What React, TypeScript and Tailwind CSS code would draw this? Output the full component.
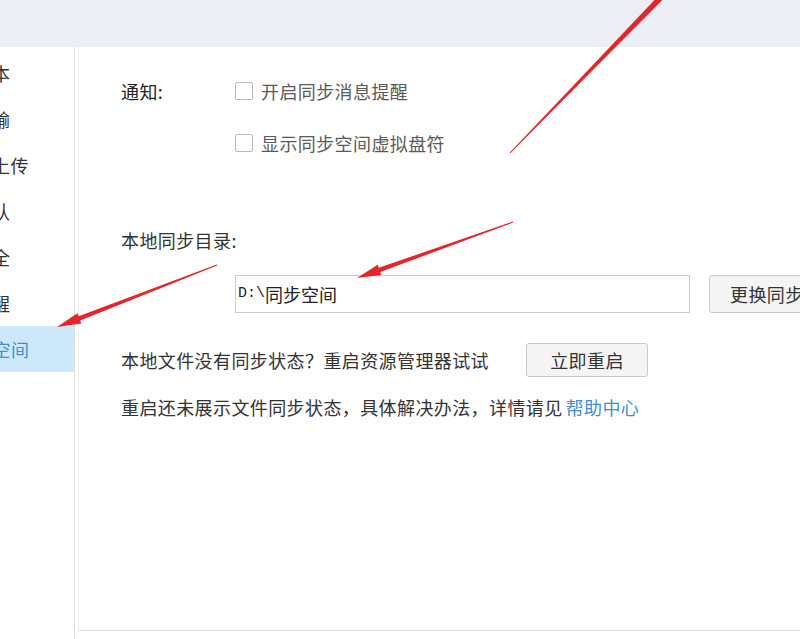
import React from "react";

type Pt = [number, number];

// tapered annotation arrow: thin at the tail, widening towards the head
function arrowPoints(tail: Pt, tip: Pt, tailW: number, shaftW: number, headLen: number, headW: number, head = true) {
  const dx = tip[0] - tail[0];
  const dy = tip[1] - tail[1];
  const len = Math.hypot(dx, dy);
  const ux = dx / len;
  const uy = dy / len;
  const nx = -uy;
  const ny = ux;
  const bx = tip[0] - ux * headLen;
  const by = tip[1] - uy * headLen;
  const p = (x: number, y: number) => `${x.toFixed(1)},${y.toFixed(1)}`;
  if (!head) {
    return [
      p(tail[0] + (nx * tailW) / 2, tail[1] + (ny * tailW) / 2),
      p(tip[0] + (nx * shaftW) / 2, tip[1] + (ny * shaftW) / 2),
      p(tip[0] - (nx * shaftW) / 2, tip[1] - (ny * shaftW) / 2),
      p(tail[0] - (nx * tailW) / 2, tail[1] - (ny * tailW) / 2),
    ].join(" ");
  }
  return [
    p(tail[0] + (nx * tailW) / 2, tail[1] + (ny * tailW) / 2),
    p(bx + (nx * shaftW) / 2, by + (ny * shaftW) / 2),
    p(bx + (nx * headW) / 2, by + (ny * headW) / 2),
    p(tip[0], tip[1]),
    p(bx - (nx * headW) / 2, by - (ny * headW) / 2),
    p(bx - (nx * shaftW) / 2, by - (ny * shaftW) / 2),
    p(tail[0] - (nx * tailW) / 2, tail[1] - (ny * tailW) / 2),
  ].join(" ");
}

const navItems = ["基本", "传输", "自动上传", "默认", "安全", "提醒", "同步空间"];

function Checkbox({ label }: { label: string }) {
  return (
    <label className="flex items-center h-[26px]">
      <span className="w-[18px] h-[18px] border border-[#b9b9b9] rounded-[2px] bg-white shrink-0" />
      <span className="ml-[8px] text-[#5a5a5a]">{label}</span>
    </label>
  );
}

export default function App() {
  return (
    <div
      className="relative w-[800px] h-[639px] overflow-hidden bg-white text-[18px] tracking-[0.4px] text-[#333]"
      style={{ fontFamily: '"Microsoft YaHei", "Noto Sans CJK SC", "Noto Sans", sans-serif' }}
    >
      <div className="h-[47px] bg-[#ebeef3]" />

      <div className="flex h-[592px]">
        {/* settings nav, cut off at the left edge */}
        <div className="w-[75px] shrink-0 border-r border-[#e0e0e0] overflow-hidden pt-[3px]">
          <div className="ml-[-90px] w-[164px]">
            {navItems.map((item) => (
              <div
                key={item}
                className={
                  item === "同步空间"
                    ? "h-[46px] flex items-center justify-center bg-[#cde8f9] text-[#3d8fd6] w-[165px]"
                    : "h-[46px] flex items-center justify-center text-[#333]"
                }
              >
                {item}
              </div>
            ))}
          </div>
        </div>

        <div className="flex-1 pl-[3px] flex flex-col">
          <div className="h-[584px] border-l border-b border-l-[#f0f0f0] border-b-[#dcdcdc] pl-[42px] pt-[31px]">
            <div className="flex">
              <div className="w-[114px] h-[26px] flex items-center text-[#222]">通知:</div>
              <div className="flex flex-col gap-[26px]">
                <Checkbox label="开启同步消息提醒" />
                <Checkbox label="显示同步空间虚拟盘符" />
              </div>
            </div>

            <div className="mt-[71px] h-[26px] flex items-center">本地同步目录:</div>

            <div className="mt-[22px] ml-[114px] flex items-center gap-[19px]">
              <div className="w-[455px] h-[38px] border border-[#c3cfd8] flex items-center pl-[2px] text-[#222] whitespace-nowrap">
                <span className="text-[15px] tracking-normal" style={{ fontFamily: '"Liberation Mono", monospace' }}>
                  D:\
                </span>
                <span className="tracking-normal">同步空间</span>
              </div>
              <button className="w-[120px] h-[38px] shrink-0 border border-[#c8c8c8] rounded-[3px] bg-[#f4f4f4] text-left pl-[20px] whitespace-nowrap">
                更换同步目录
              </button>
            </div>

            <div className="mt-[30px] flex items-center h-[34px]">
              <span className="w-[405px] whitespace-nowrap">本地文件没有同步状态？重启资源管理器试试</span>
              <button className="w-[122px] h-[34px] border border-[#c8c8c8] rounded-[3px] bg-[#f4f4f4] flex items-center justify-center">
                立即重启
              </button>
            </div>

            <div className="mt-[17px] h-[26px] flex items-center whitespace-nowrap">
              重启还未展示文件同步状态，具体解决办法，详情请见
              <span className="ml-[3px] text-[#3b8fd9]">帮助中心</span>
            </div>
          </div>
        </div>
      </div>

      {/* red annotation arrows drawn over the screenshot */}
      <svg className="absolute inset-0 pointer-events-none" width="800" height="639" viewBox="0 0 800 639">
        <polygon points={arrowPoints([510, 153], [672, -14], 1, 6, 0, 0, false)} fill="#e5252a" />
        <polygon points={arrowPoints([513, 222], [357, 278], 1, 4.5, 24, 11)} fill="#e5252a" />
        <polygon points={arrowPoints([217, 265], [57, 327], 1, 4.5, 24, 11)} fill="#e5252a" />
      </svg>
    </div>
  );
}
